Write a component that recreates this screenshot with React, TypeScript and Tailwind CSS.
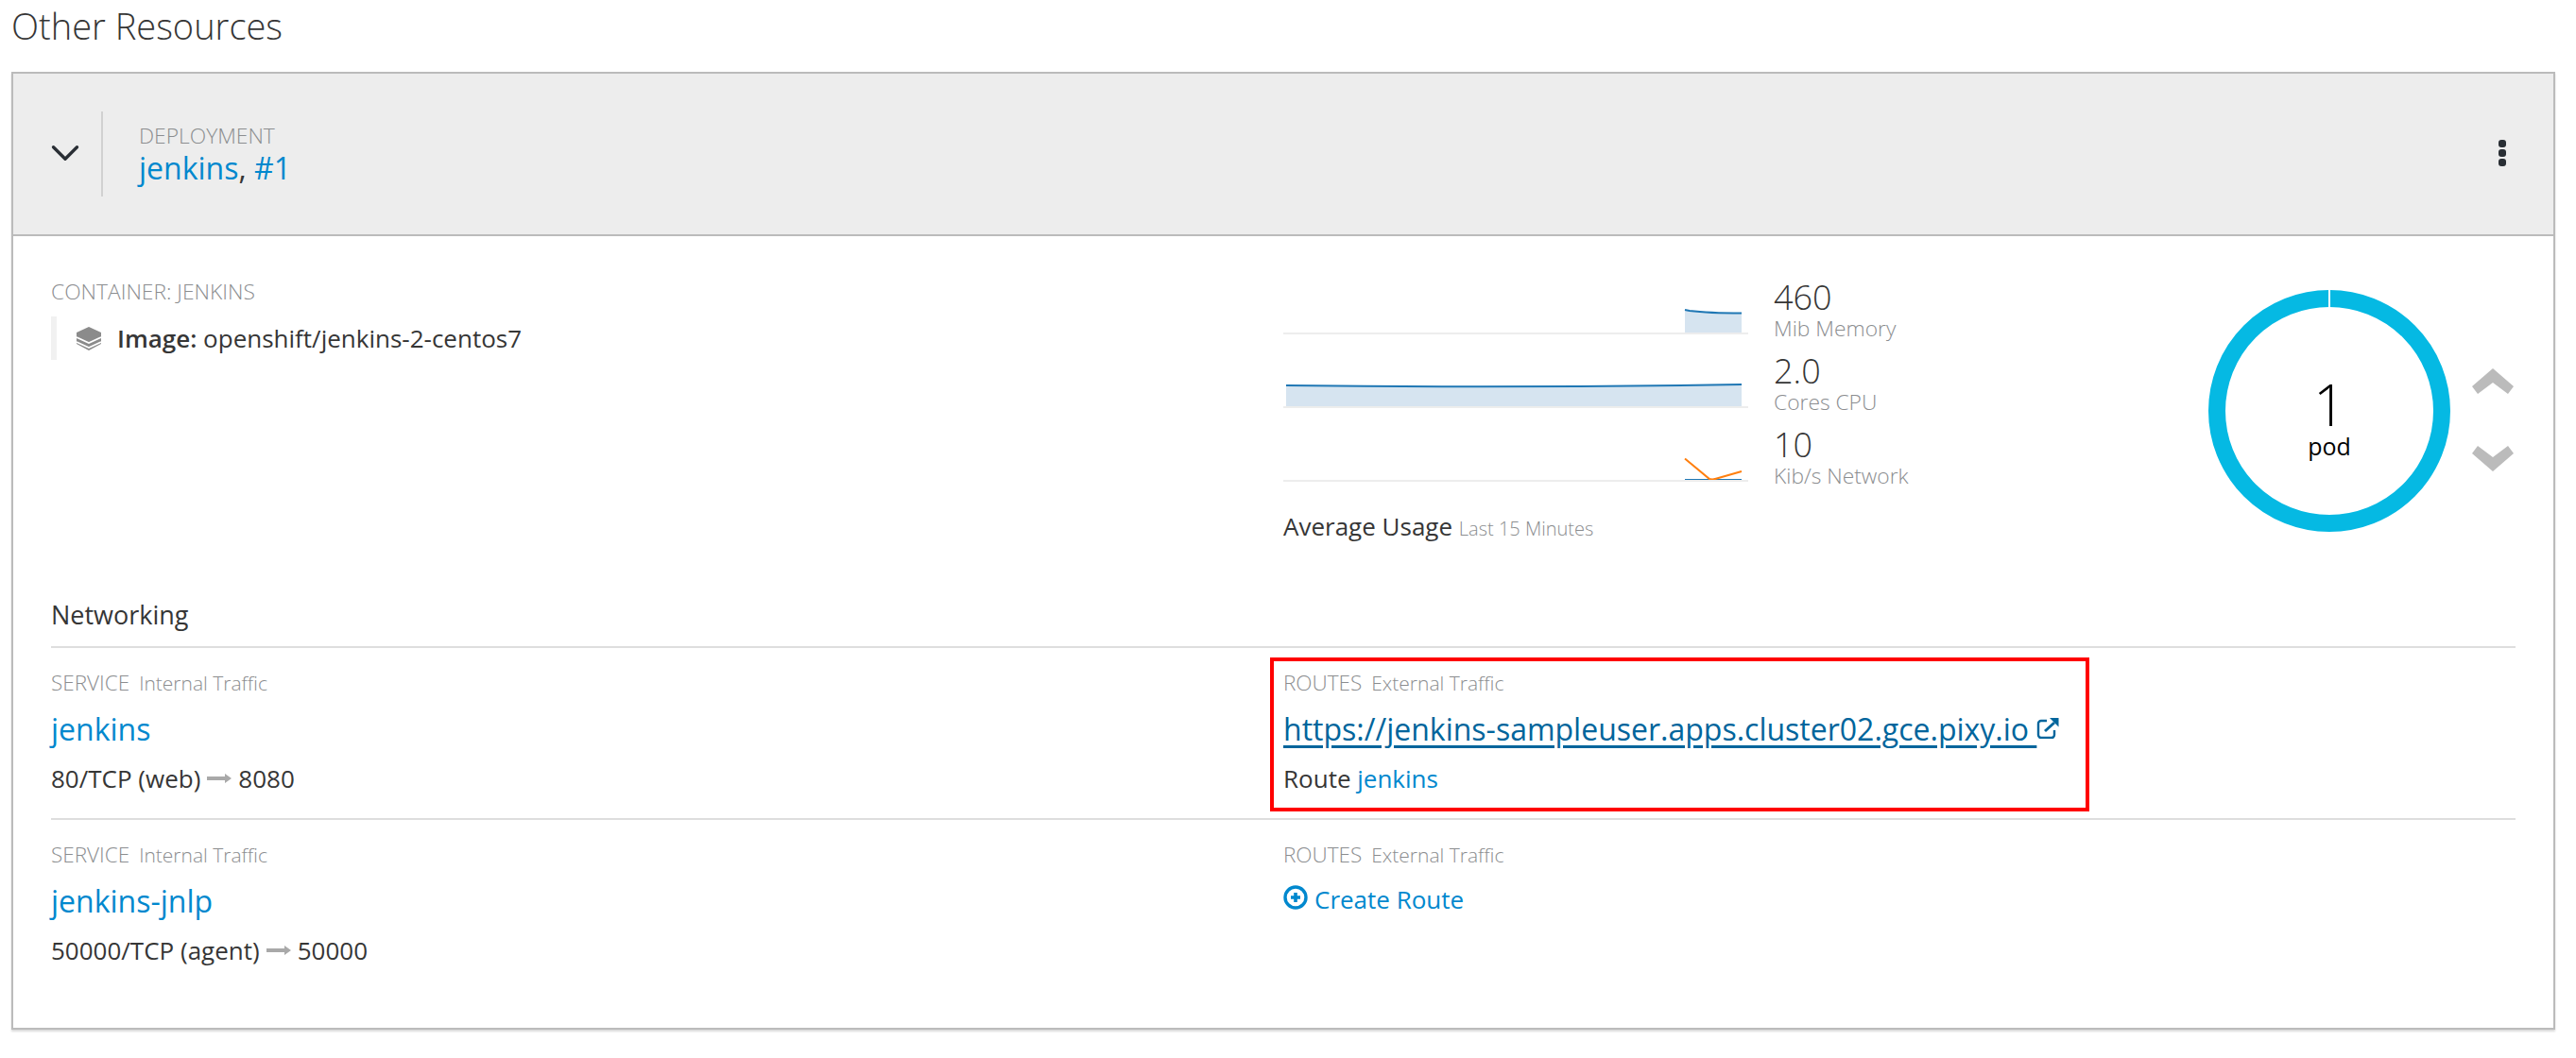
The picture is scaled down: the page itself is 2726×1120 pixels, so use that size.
import { ChevronDown } from "lucide-react"

function LayersIcon() {
  return (
    <svg viewBox="0 0 26 25" className="w-[26px] h-[25px] text-[#8b8b8b] shrink-0">
      <path d="M13 0 26 6v12l-13 7-13-7V6z" fill="currentColor" />
      <path d="M0 11l13 6 13-6M0 16l13 6 13-6" fill="none" stroke="#fff" strokeWidth="1.7" />
    </svg>
  )
}

function LongArrow() {
  return (
    <svg viewBox="0 0 26 10" className="w-[26px] h-[10px] mx-[7px] text-[#a9a9a9] inline-block" fill="currentColor">
      <path d="M0 3h19V0l7 5-7 5V7H0z" />
    </svg>
  )
}

function Sparkline({ children }: { children?: React.ReactNode }) {
  return (
    <svg viewBox="0 0 492 60" className="w-[492px] h-[60px] shrink-0 mb-[7px]">
      {children}
      <rect x="0" y="57" width="492" height="2" fill="#ededed" />
    </svg>
  )
}

function Metric({ value, label, children }: { value: string; label: string; children?: React.ReactNode }) {
  return (
    <div className="flex items-end h-[78px]">
      <Sparkline>{children}</Sparkline>
      <div className="ml-[27px]">
        <div className="text-[36px] leading-[39px] font-light text-[#363636]">{value}</div>
        <div className="text-[22.8px] leading-[28px] font-light text-[#8b8d8f] whitespace-nowrap">{label}</div>
      </div>
    </div>
  )
}

function Label({ name, note }: { name: string; note: string }) {
  return (
    <div className="text-[22.5px] leading-[28px] font-light text-[#8b8d8f] whitespace-nowrap">
      {name}
      <span className="text-[21px] ml-[10px]">{note}</span>
    </div>
  )
}

export default function App() {
  return (
    <div className="min-h-[1120px] bg-white px-[12px] pt-[1px] font-['Open_Sans',sans-serif] text-[#363636]">
      <h1 className="text-[38px] leading-[52px] font-light h-[75px]">Other Resources</h1>

      <div className="w-[2692px] h-[1014px] border-2 border-[#bbb] shadow-[0_2px_2px_rgba(0,0,0,0.15)]">
        {/* Deployment header */}
        <div className="flex items-center h-[172px] bg-[#ededed] border-b-2 border-[#bbb]">
          <div className="w-[93px] flex justify-center pl-[16px] pb-[2px]">
            <ChevronDown className="w-[50px] h-[50px] text-[#292e34]" strokeWidth={1.6} />
          </div>
          <div className="w-[2px] h-[90px] bg-[#d1d1d1]" />
          <div className="ml-[38px] flex-1 pt-[1px]">
            <div className="text-[22.8px] leading-[28px] font-light text-[#8b8d8f]">DEPLOYMENT</div>
            <div className="text-[32px] leading-[40px]">
              <span className="text-[#0088ce]">jenkins</span>, <span className="text-[#0088ce]">#1</span>
            </div>
          </div>
          <div className="flex flex-col gap-[2px] mr-[50px] pb-[2px]">
            <span className="w-[8px] h-[8px] rounded-[3px] bg-[#292e34]" />
            <span className="w-[8px] h-[8px] rounded-[3px] bg-[#292e34]" />
            <span className="w-[8px] h-[8px] rounded-[3px] bg-[#292e34]" />
          </div>
        </div>

        <div className="px-[40px]">
          {/* Container, metrics and pods */}
          <div className="flex h-[383px] pt-[45px]">
            <div className="w-[1304px]">
              <div className="text-[22.8px] leading-[28px] font-light text-[#8b8d8f]">CONTAINER: JENKINS</div>
              <div className="flex items-center gap-[17px] h-[46px] mt-[12px] border-l-[6px] border-[#f1f1f1] pl-[21px]">
                <LayersIcon />
                <div className="text-[26px] leading-[36px] whitespace-nowrap">
                  <span className="font-semibold">Image:</span> openshift/jenkins-2-centos7
                </div>
              </div>
            </div>

            <div className="w-[1304px] flex justify-between">
              <div className="-mt-[11px]">
                <Metric value="460" label="Mib Memory">
                  <path d="M425 33 L430 34 Q450 36.5 485 36.5 V58 H425 Z" fill="#d6e4f0" />
                  <path d="M425 33 L430 34 Q450 36.5 485 36.5" fill="none" stroke="#1f77b4" strokeWidth="2" />
                </Metric>
                <Metric value="2.0" label="Cores CPU">
                  <path d="M3 35 Q240 38 485 34 V58 H3 Z" fill="#d6e4f0" />
                  <path d="M3 35 Q240 38 485 34" fill="none" stroke="#1f77b4" strokeWidth="2" />
                </Metric>
                <Metric value="10" label="Kib/s Network">
                  <path d="M425 57 H485" fill="none" stroke="#1f77b4" strokeWidth="2" />
                  <path d="M425 34.5 L451 56 Q454 57 457 56 L485 48" fill="none" stroke="#ff7f0e" strokeWidth="2" />
                </Metric>
                <div className="mt-[21px] text-[26px] leading-[36px] whitespace-nowrap">
                  Average Usage <span className="text-[20px] font-light text-[#8b8d8f]">Last 15 Minutes</span>
                </div>
              </div>

              <div className="flex items-center h-[256px] mt-[12px] mr-[2px]">
                <div className="relative w-[256px] h-[256px]">
                  <svg viewBox="0 0 256 256" className="w-[256px] h-[256px]">
                    <circle cx="128" cy="128" r="119" fill="none" stroke="#05b9e3" strokeWidth="18" />
                    <rect x="127" y="0" width="2" height="19" fill="#fff" />
                  </svg>
                  <div className="absolute inset-0 flex flex-col items-center justify-center pt-[15px] text-black">
                    <div className="text-[60px] leading-[60px] font-light">1</div>
                    <div className="text-[25px] leading-[30px] -mt-[1px]">pod</div>
                  </div>
                </div>
                <div className="ml-[23px] pt-[18px] flex flex-col gap-[53px]">
                  <svg viewBox="0 0 44 28" className="w-[44px] h-[28px] text-[#bbb]" fill="currentColor">
                    <path d="M22 0 44 19l-6 8-16-12L6 27l-6-8z" />
                  </svg>
                  <svg viewBox="0 0 44 28" className="w-[44px] h-[28px] text-[#bbb]" fill="currentColor">
                    <path d="M22 28 44 9l-6-8-16 12L6 1 0 9z" />
                  </svg>
                </div>
              </div>
            </div>
          </div>

          {/* Networking */}
          <div className="text-[27px] leading-[36px] pb-[15px] border-b-2 border-[#dedede]">Networking</div>

          <div className="grid grid-cols-2 h-[182px] border-b-2 border-[#dedede] pt-[23px]">
            <div>
              <Label name="SERVICE" note="Internal Traffic" />
              <div className="text-[32px] leading-[48px] mt-[11px] text-[#0088ce]">jenkins</div>
              <div className="text-[26px] leading-[36px] mt-[10px] flex items-center">
                80/TCP (web)
                <LongArrow />
                8080
              </div>
            </div>
            <div className="relative">
              <Label name="ROUTES" note="External Traffic" />
              <div className="flex items-center mt-[11px] leading-[48px] text-[#00659c]">
                <span className="text-[32px] underline underline-offset-[5px] whitespace-nowrap">
                  https://jenkins-sampleuser.apps.cluster02.gce.pixy.io&nbsp;
                </span>
                <svg viewBox="0 0 24 22" className="w-[24px] h-[22px] -mt-[2px]">
                  <path
                    d="M11 3H5a3 3 0 0 0-3 3v12a3 3 0 0 0 3 3h11a3 3 0 0 0 3-3v-5"
                    fill="none"
                    stroke="currentColor"
                    strokeWidth="2.4"
                  />
                  <path d="M9 14 19 5" fill="none" stroke="currentColor" strokeWidth="3" />
                  <path d="M14 0h9.5v9.5z" fill="currentColor" />
                </svg>
              </div>
              <div className="text-[26px] leading-[36px] mt-[10px]">
                Route <span className="text-[#0088ce]">jenkins</span>
              </div>
              <div className="absolute left-[-14px] top-[-13px] w-[867px] h-[163px] border-4 border-[#f00]" />
            </div>
          </div>

          <div className="grid grid-cols-2 pt-[23px]">
            <div>
              <Label name="SERVICE" note="Internal Traffic" />
              <div className="text-[32px] leading-[48px] mt-[11px] text-[#0088ce]">jenkins-jnlp</div>
              <div className="text-[26px] leading-[36px] mt-[10px] flex items-center">
                50000/TCP (agent)
                <LongArrow />
                50000
              </div>
            </div>
            <div>
              <Label name="ROUTES" note="External Traffic" />
              <div className="flex items-center gap-[7px] mt-[9px] h-[48px] text-[#0088ce]">
                <svg viewBox="0 0 26 26" className="w-[26px] h-[26px] -mt-[5px]" fill="none" stroke="currentColor">
                  <circle cx="13" cy="13" r="11" strokeWidth="3.4" />
                  <path d="M13 8v10M8 13h10" strokeWidth="3.6" />
                </svg>
                <span className="text-[26px]">Create Route</span>
              </div>
            </div>
          </div>
        </div>
      </div>
    </div>
  )
}
